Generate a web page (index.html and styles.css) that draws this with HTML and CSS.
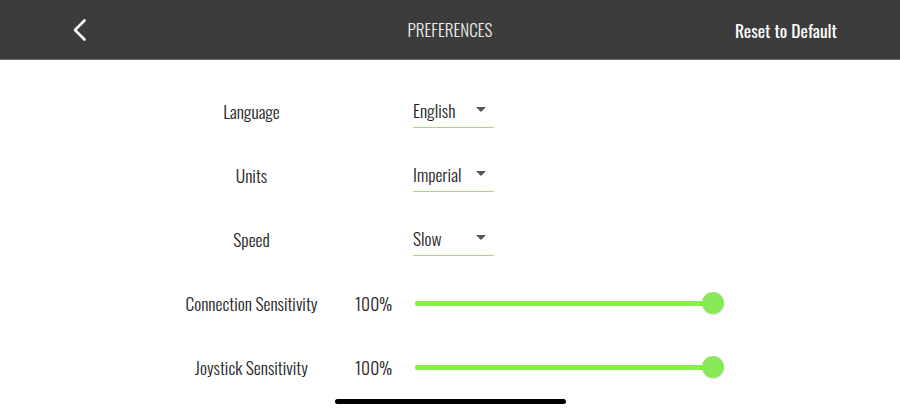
FILE: index.html
```html
<!DOCTYPE html>
<html lang="en">
<head>
<meta charset="utf-8">
<title>Preferences</title>
<link rel="stylesheet" href="styles.css">
</head>
<body>
<div class="screen">
  <header class="topbar">
    <button class="back" aria-label="Back">
      <svg width="16" height="24" viewBox="0 0 16 24"><path d="M12.5 2.5 L3 12 L12.5 21.5" fill="none" stroke="#fff" stroke-width="2.6" stroke-linecap="round" stroke-linejoin="round"/></svg>
    </button>
    <h1 class="title">PREFERENCES</h1>
    <button class="reset">Reset to Default</button>
  </header>

  <main class="prefs">
    <div class="row">
      <span class="label">Language</span>
      <span class="pct"></span>
      <div class="select"><span>English</span><i class="caret"></i></div>
    </div>
    <div class="row">
      <span class="label">Units</span>
      <span class="pct"></span>
      <div class="select"><span>Imperial</span><i class="caret"></i></div>
    </div>
    <div class="row">
      <span class="label">Speed</span>
      <span class="pct"></span>
      <div class="select"><span>Slow</span><i class="caret"></i></div>
    </div>
    <div class="row">
      <span class="label">Connection Sensitivity</span>
      <span class="pct">100%</span>
      <div class="slider"><div class="track"><div class="fill" style="width:100%"></div><span class="thumb" style="left:100%"></span></div></div>
    </div>
    <div class="row">
      <span class="label">Joystick Sensitivity</span>
      <span class="pct">100%</span>
      <div class="slider"><div class="track"><div class="fill" style="width:100%"></div><span class="thumb" style="left:100%"></span></div></div>
    </div>
  </main>

  <footer class="home"><span class="home-bar"></span></footer>
</div>
</body>
</html>
```
FILE: styles.css
```css
* { box-sizing: border-box; }

html, body {
  margin: 0;
  padding: 0;
  background: #fff;
}

body {
  font-family: "Oswald", "Roboto Condensed", "Liberation Sans Narrow", sans-serif;
  color: #1e1e1e;
}

.screen {
  width: 900px;
  height: 416px;
  display: flex;
  flex-direction: column;
  overflow: hidden;
}

/* top navigation bar */
.topbar {
  height: 60px;
  flex: none;
  background: #3c3c3c;
  border-bottom: 1px solid #6e6e6e;
  display: grid;
  grid-template-columns: 1fr auto 1fr;
  align-items: center;
  padding: 0 63px;
}

.back {
  justify-self: start;
  background: none;
  border: 0;
  padding: 0;
  width: 20px;
  height: 24px;
  display: flex;
  align-items: center;
  margin: 1px 0 0 9px;
}

.title {
  margin: 0;
  font-size: 17px;
  font-weight: 300;
  color: #ececec;
  letter-spacing: 0.05px;
}

.reset {
  justify-self: end;
  background: none;
  border: 0;
  padding: 0;
  font-family: inherit;
  font-size: 17.5px;
  font-weight: 400;
  color: #fff;
  margin-top: 0;
}

/* preference rows */
.prefs {
  flex: 1;
  padding: 19px 0 0 151px;
  display: flex;
  flex-direction: column;
}

.row {
  height: 64px;
  display: grid;
  grid-template-columns: 201px 62px 320px;
  align-items: center;
}

.label {
  text-align: center;
  font-size: 17.5px;
  font-weight: 300;
}

.pct {
  font-size: 17.5px;
  font-weight: 300;
  padding-left: 3px;
}

.select {
  width: 81px;
  height: 33px;
  margin: 1px 0 0 -1px;
  border-bottom: 1px solid #9ee270;
  display: flex;
  align-items: center;
  justify-content: space-between;
  padding: 0 8px 2px 0;
  font-size: 17.5px;
  font-weight: 300;
}

.caret {
  width: 0;
  height: 0;
  border-left: 5px solid transparent;
  border-right: 5px solid transparent;
  border-top: 5px solid #555;
  margin-top: -2px;
}

.slider {
  width: 298px;
  height: 24px;
  display: flex;
  align-items: center;
  margin-left: 1px;
}

.track {
  position: relative;
  width: 100%;
  height: 5px;
  border-radius: 3px;
  background: #d6d6d6;
}

.fill {
  height: 100%;
  border-radius: 3px;
  background: #86ef4a;
}

.thumb {
  position: absolute;
  top: 50%;
  width: 22px;
  height: 22px;
  margin: -11px 0 0 -11px;
  border-radius: 50%;
  background: #88e958;
  box-shadow: 0 1px 2px rgba(0, 0, 0, 0.12);
}

/* home indicator */
.home {
  height: 23px;
  flex: none;
  display: flex;
  justify-content: center;
  align-items: flex-start;
}

.home-bar {
  width: 231px;
  height: 5px;
  border-radius: 3px;
  background: #000;
  margin-left: 1px;
}
```
